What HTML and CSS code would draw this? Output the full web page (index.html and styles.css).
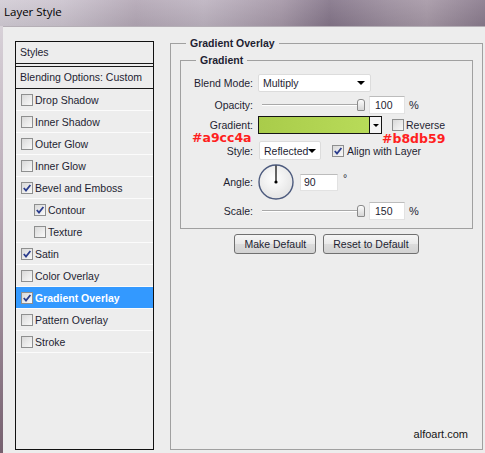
FILE: index.html
```html
<!DOCTYPE html>
<html lang="en">
<head>
    <meta charset="UTF-8">
    <meta name="viewport" content="width=device-width, initial-scale=1.0">
    <title>Layer Style</title>
    <link rel="stylesheet" href="styles.css">
</head>
<body>
    <div class="window">
        <!-- title bar -->
        <div class="titlebar">Layer Style</div>

        <div class="dialog">
            <!-- left list of effects -->
            <div class="styles">
                <div class="styles-head">Styles</div>
                <div class="styles-blend">Blending Options: Custom</div>
                <ul class="fx-list">
                    <li><span class="cb"></span>Drop Shadow</li>
                    <li><span class="cb"></span>Inner Shadow</li>
                    <li><span class="cb"></span>Outer Glow</li>
                    <li><span class="cb"></span>Inner Glow</li>
                    <li><span class="cb on"><svg viewBox="0 0 10 10"><path d="M1.8 5 L4 7.6 L8.4 2"/></svg></span>Bevel and Emboss</li>
                    <li class="sub"><span class="cb on"><svg viewBox="0 0 10 10"><path d="M1.8 5 L4 7.6 L8.4 2"/></svg></span>Contour</li>
                    <li class="sub"><span class="cb"></span>Texture</li>
                    <li><span class="cb on"><svg viewBox="0 0 10 10"><path d="M1.8 5 L4 7.6 L8.4 2"/></svg></span>Satin</li>
                    <li><span class="cb"></span>Color Overlay</li>
                    <li class="active"><span class="cb on"><svg viewBox="0 0 10 10"><path d="M1.8 5 L4 7.6 L8.4 2"/></svg></span>Gradient Overlay</li>
                    <li><span class="cb"></span>Pattern Overlay</li>
                    <li><span class="cb"></span>Stroke</li>
                </ul>
            </div>

            <!-- settings of the selected effect -->
            <fieldset class="group overlay">
                <legend>Gradient Overlay</legend>

                <fieldset class="group inner">
                    <legend>Gradient</legend>

                    <div class="row r-blend">
                        <span class="label">Blend Mode:</span>
                        <div class="select blend">Multiply<span class="arrow"></span></div>
                    </div>

                    <div class="row r-opacity">
                        <span class="label">Opacity:</span>
                        <div class="slider"><span class="thumb"></span></div>
                        <div class="num">100</div>
                        <span class="unit">%</span>
                    </div>

                    <div class="row r-gradient">
                        <span class="label">Gradient:</span>
                        <div class="gradient">
                            <span class="fill"></span>
                            <span class="drop"><span class="arrow small"></span></span>
                        </div>
                        <span class="cb reverse"></span>
                        <span class="cb-text">Reverse</span>
                        <!-- red colour notes written over the dialog -->
                        <span class="note note-a">#a9cc4a</span>
                        <span class="note note-b">#b8db59</span>
                    </div>

                    <div class="row r-style">
                        <span class="label">Style:</span>
                        <div class="select style">Reflected<span class="arrow"></span></div>
                        <span class="cb on align"><svg viewBox="0 0 10 10"><path d="M1.8 5 L4 7.6 L8.4 2"/></svg></span>
                        <span class="cb-text">Align with Layer</span>
                    </div>

                    <div class="row r-angle">
                        <span class="label">Angle:</span>
                        <svg class="dial" viewBox="0 0 36 36">
                            <defs>
                                <radialGradient id="dialFill" cx="45%" cy="40%" r="60%">
                                    <stop offset="0" stop-color="#ffffff"/>
                                    <stop offset="1" stop-color="#e4e4e4"/>
                                </radialGradient>
                            </defs>
                            <circle cx="18" cy="18" r="17" fill="url(#dialFill)" stroke="#4d5b7e" stroke-width="1.4"/>
                            <line x1="18" y1="18" x2="18" y2="1.5" stroke="#000" stroke-width="1.2"/>
                            <circle cx="18" cy="18" r="1.6" fill="#000"/>
                        </svg>
                        <div class="num angle">90</div>
                        <span class="deg">°</span>
                    </div>

                    <div class="row r-scale">
                        <span class="label">Scale:</span>
                        <div class="slider"><span class="thumb"></span></div>
                        <div class="num">150</div>
                        <span class="unit">%</span>
                    </div>
                </fieldset>

                <div class="buttons">
                    <button class="btn">Make Default</button>
                    <button class="btn">Reset to Default</button>
                </div>

                <div class="watermark">alfoart.com</div>
            </fieldset>
        </div>
    </div>
</body>
</html>
```

FILE: styles.css
```css
body
{
    margin: 0px;
    padding: 0px;
    font-family: "Liberation Sans", Arial, sans-serif;
    font-size: 10.5px;
    color: #1e1e32;
}

/* whole dialog window */
.window
{
    width: 485px;
    height: 453px;
    display: flex;
    flex-direction: column;
    overflow: hidden;
    /* the strip on the left is the photo behind the dialog */
    background: linear-gradient(#dcd7dd, #b9aab6 45%, #76606f);
}

.titlebar
{
    height: 26px;
    line-height: 24px;
    padding-left: 4px;
    font-family: "Open Sans", "Liberation Sans", sans-serif;
    font-size: 11.5px;
    color: #000;
    background:
        linear-gradient(rgba(255,255,255,0.08), rgba(0,0,0,0.06)),
        linear-gradient(to right, #d3cdd6 0%, #cbc3ce 13%, #b4a8b6 28%, #beb4c1 42%, #a597a7 58%, #85768a 68%, #9c8e9e 80%, #a799a7 88%, #8a7b8d 100%);
}

.dialog
{
    flex: 1;
    display: flex;
    margin-left: 3px;
    background-color: #ededed;
    border-top: 1px solid #b5afb6;
    padding: 9px 2px 3px 12px;
}

/* left list */
.styles
{
    width: 139px;
    box-sizing: border-box;
    margin-top: 5px;
    border: 1px solid #111;
}

.styles-head
{
    height: 21px;
    line-height: 21px;
    padding-left: 4px;
    border-bottom: 4px double #1a1a1a;
}

.styles-blend
{
    height: 21px;
    line-height: 21px;
    padding-left: 4px;
    border-bottom: 1px solid #1a1a1a;
}

.fx-list
{
    list-style-type: none;
    margin: 0px;
    padding: 0px;
}

.fx-list li
{
    height: 21px;
    display: flex;
    align-items: center;
    padding-left: 5px;
    border-bottom: 1px solid #fbfbfb;
}

.fx-list li.sub
{
    padding-left: 18px;
}

.fx-list li.active
{
    background-color: #3399ff;
    color: #fff;
    font-weight: bold;
}

/* checkbox */
.cb
{
    width: 12px;
    height: 12px;
    box-sizing: border-box;
    flex: none;
    display: flex;
    align-items: center;
    justify-content: center;
    margin-right: 2px;
    border: 1px solid #8e8f8f;
    background: linear-gradient(135deg, #d9d9d9, #f9f9f9);
}

.cb svg
{
    width: 10px;
    height: 10px;
    fill: none;
    stroke: #2b3d8d;
    stroke-width: 1.8;
}

/* group boxes */
.group
{
    margin: 0px;
    padding: 0px;
    min-inline-size: 0;
    border: 1px solid #a0a0a0;
}

.group legend
{
    margin-left: 15px;
    padding: 0px 4px;
    line-height: 14px;
    font-weight: bold;
}

.overlay
{
    width: 313px;
    box-sizing: border-box;
    margin-left: 16px;
    display: flex;
    flex-direction: column;
}

.inner
{
    margin: 3px 9px 0px;
    padding-bottom: 8px;
}

/* one line of settings */
.row
{
    position: relative;
    display: flex;
    align-items: center;
    height: 18px;
}

.r-blend { margin-top: 7px; }
.r-opacity { margin-top: 4px; }
.r-gradient { margin-top: 2px; }
.r-style { margin-top: 7px; height: 19px; }
.r-angle { margin-top: 4px; height: 36px; }
.r-scale { margin-top: 2px; }

.label
{
    width: 72px;
    flex: none;
    margin-right: 5px;
    text-align: right;
}

.select
{
    height: 18px;
    box-sizing: border-box;
    display: flex;
    align-items: center;
    justify-content: space-between;
    padding: 0px 5px 0px 4px;
    background-color: #fff;
    border: 1px solid #dcdcdc;
    border-radius: 2px;
}

.select.blend { width: 113px; }
.select.style { width: 62px; height: 19px; margin-left: 1px; }

.arrow
{
    width: 0px;
    height: 0px;
    border-left: 4px solid transparent;
    border-right: 4px solid transparent;
    border-top: 4px solid #000;
}

.arrow.small
{
    border-left-width: 3px;
    border-right-width: 3px;
    border-top-width: 3px;
}

/* slider with a line and a handle */
.slider
{
    width: 111px;
    height: 16px;
    box-sizing: border-box;
    display: flex;
    align-items: center;
    justify-content: flex-end;
    padding-right: 4px;
    background:
        linear-gradient(#a9a9a9, #a9a9a9) 4px 7px / 98px 1px no-repeat,
        linear-gradient(#fff, #fff) 4px 8px / 98px 1px no-repeat;
}

.thumb
{
    width: 8px;
    height: 12px;
    box-sizing: border-box;
    border: 1px solid #8a8a8a;
    border-radius: 3px 3px 1px 1px;
    background: linear-gradient(#fbfbfb, #d6d6d6);
}

.num
{
    width: 36px;
    height: 18px;
    box-sizing: border-box;
    line-height: 16px;
    padding-left: 5px;
    background-color: #fff;
    border: 1px solid #e2e2e2;
    border-top-color: #bcbcbc;
}

.num.angle
{
    width: 38px;
    height: 17px;
    line-height: 15px;
    margin-left: 6px;
    padding-left: 3px;
}

.unit
{
    margin-left: 4px;
    font-size: 11px;
}

.deg
{
    align-self: flex-start;
    margin: 8px 0px 0px 5px;
}

.dial
{
    width: 36px;
    height: 36px;
    flex: none;
}

/* gradient picker */
.gradient
{
    width: 124px;
    height: 18px;
    box-sizing: border-box;
    display: flex;
    border: 1px solid #151515;
}

.gradient .fill
{
    flex: 1;
    background: linear-gradient(to right, #a9cc4a, #b8db59);
    border-right: 1px solid #151515;
}

.gradient .drop
{
    width: 11px;
    display: flex;
    align-items: center;
    justify-content: center;
    background-color: #f4f4f4;
}

.cb.reverse { margin-left: 10px; }
.cb.align { margin-left: 11px; margin-right: 3px; }

/* red colour notes */
.note
{
    position: absolute;
    font-family: "DejaVu Sans", Verdana, sans-serif;
    font-size: 12.5px;
    line-height: 14px;
    font-weight: bold;
    color: #ff1f1f;
}

.note-a { left: 11px; top: 15px; }
.note-b { left: 201px; top: 16px; }

/* buttons */
.buttons
{
    display: flex;
    justify-content: center;
    gap: 7px;
    margin-top: 5px;
}

.btn
{
    height: 20px;
    padding: 0px 9px;
    font-family: inherit;
    font-size: 10.5px;
    color: #1e1e32;
    border: 1px solid #707070;
    border-radius: 3px;
    background: linear-gradient(#f6f6f6, #e9e9e9 50%, #dcdcdc 51%, #d2d2d2);
}

.watermark
{
    margin-top: auto;
    margin-bottom: 9px;
    padding-right: 14px;
    text-align: right;
    font-size: 11px;
    color: #151515;
}
```
